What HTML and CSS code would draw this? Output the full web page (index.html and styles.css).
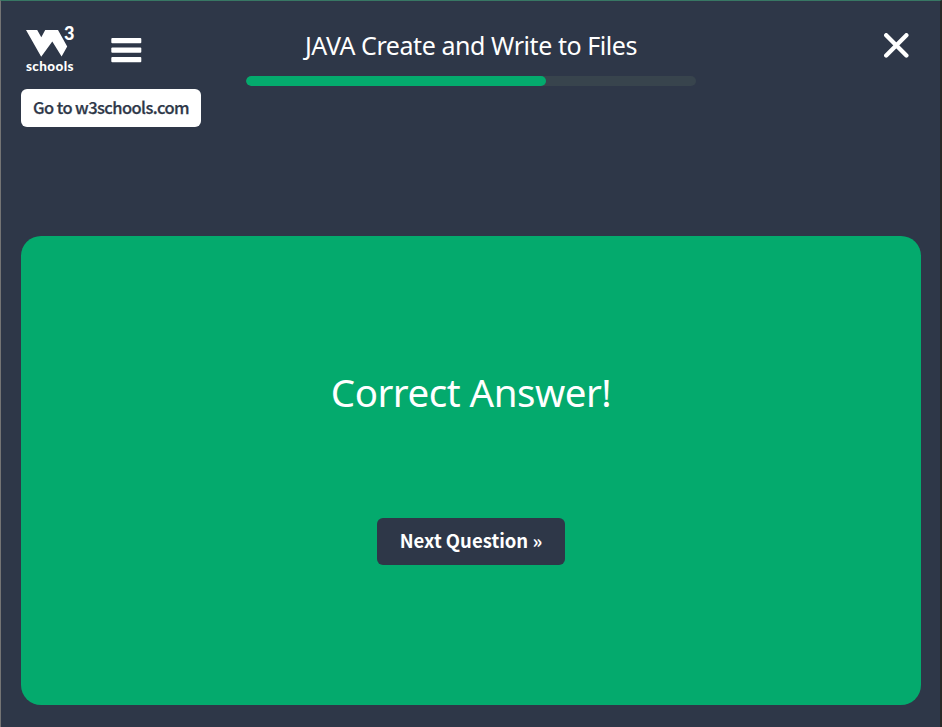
FILE: index.html
```html
<!DOCTYPE html>
<html lang="en">
<head>
<meta charset="utf-8">
<title>JAVA Create and Write to Files</title>
<link rel="stylesheet" href="styles.css">
</head>
<body>
<div class="page">
  <header class="header">
    <div class="brand">
      <div class="brand-row">
        <a class="logo" aria-label="w3schools">
          <svg class="logo-mark" width="50" height="32" viewBox="0 0 50 32">
            <path fill="#fff" d="M0 5h11.2l4.1 7.2L19.2 5H32l9.2 16.4-5.6 10.2-9.3-15.2L15.2 31.8z"/>
          </svg>
          <span class="logo-exp">3</span>
          <span class="logo-text">schools</span>
        </a>
        <svg class="menu" width="31" height="26" viewBox="0 0 31 26" fill="#fff">
          <rect x=".3" y="0" width="30" height="5.2" rx="1"/>
          <rect x=".3" y="9.5" width="30" height="5.3" rx="1"/>
          <rect x=".3" y="19" width="30" height="5.3" rx="1"/>
        </svg>
      </div>
      <a class="site-link"><span>Go to w3schools.com</span></a>
    </div>
    <div class="heading">
      <h1 class="title">JAVA Create and Write to Files</h1>
      <div class="progress"><div class="progress-fill"></div></div>
    </div>
    <svg class="close" width="25" height="25" viewBox="0 0 25 25">
      <path d="M2.2 2.2 22.4 22.4M22.4 2.2 2.2 22.4" stroke="#fff" stroke-width="4.3" stroke-linecap="round" fill="none"/>
    </svg>
  </header>
  <main class="card">
    <h2 class="result">Correct Answer!</h2>
    <button class="next"><span>Next Question »</span></button>
  </main>
</div>
</body>
</html>
```

FILE: styles.css
```css
* { box-sizing: border-box; }
body { margin: 0; background: #2e3748; color: #fff; }
.page {
  height: 727px;
  padding: 0 19px 22px 20px;
  border-top: 1px solid #387764;
  border-left: 1px solid #747474;
  border-right: 2px solid #282828;
  overflow: hidden;
}
.header {
  display: grid;
  grid-template-columns: 225px 450px 1fr;
  height: 235px;
}
.brand { padding-top: 24px; }
.brand-row { display: flex; height: 64px; padding-left: 5px; }
.logo { position: relative; width: 50px; height: 50px; }
.logo-mark { display: block; }
.logo-exp {
  position: absolute; left: 38px; top: -1px;
  font: 900 18px/18px Lato, sans-serif;
}
.logo-text {
  display: block; height: 18px;
  font: 900 13.5px/18px Lato, sans-serif; letter-spacing: .4px;
}
.menu { margin: 13px 0 0 35px; }
.site-link {
  display: flex; align-items: center; justify-content: center;
  width: 180px; height: 38px; padding-bottom: 1px; border-radius: 6px;
  background: #fff; color: #2e3748;
  font: 500 16.5px/23px "Noto Sans CJK SC", sans-serif;
  letter-spacing: -.58px; white-space: nowrap;
  -webkit-text-stroke: .25px #2e3748;
}
.heading { padding-top: 27px; }
.title {
  margin: 0; height: 48px; text-align: center;
  font: 400 25px/35px "Noto Sans", sans-serif; white-space: nowrap;
  letter-spacing: -.43px;
}
.progress { height: 10px; border-radius: 5px; background: #38444d; overflow: hidden; }
.progress-fill { width: 300px; height: 10px; border-radius: 5px; background: #04aa6d; }
.close { justify-self: end; margin: 32px 12px 0 0; }
.card {
  display: flex; flex-direction: column; align-items: center;
  height: 469px; padding-top: 130px; border-radius: 20px; background: #04aa6d;
}
.result {
  margin: 0; height: 152px;
  font: 400 38.5px/53px "Noto Sans", sans-serif; white-space: nowrap;
  letter-spacing: -.5px;
}
.next {
  width: 188px; height: 47px; padding: 0 0 3px; border: 0; border-radius: 6px;
  background: #2e3748; color: #fff;
  font: 700 18.5px/28px "Noto Sans CJK SC", sans-serif; white-space: nowrap;
}
```
